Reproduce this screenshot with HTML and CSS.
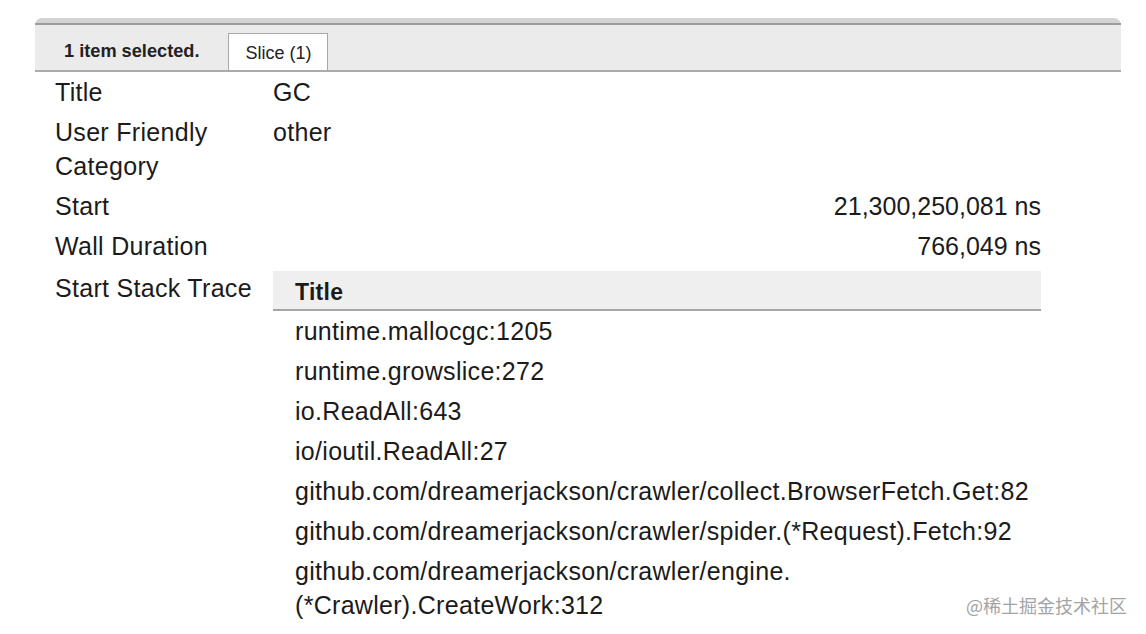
FILE: index.html
```html
<!DOCTYPE html>
<html>
<head>
<meta charset="utf-8">
<link rel="stylesheet" href="styles.css">
</head>
<body>
<div class="panel">
  <div class="tabbar">
    <div class="tabbar-inner">
      <span class="selected">1 item selected.</span>
      <span class="tab">Slice (1)</span>
    </div>
  </div>
  <div class="props">
    <div class="label">Title</div>
    <div class="value">GC</div>
    <div class="label">User Friendly<br>Category</div>
    <div class="value">other</div>
    <div class="label">Start</div>
    <div class="value num">21,300,250,081 ns</div>
    <div class="label">Wall Duration</div>
    <div class="value num">766,049 ns</div>
    <div class="label trace-label">Start Stack Trace</div>
    <div class="value trace">
      <div class="trace-head">Title</div>
      <div class="trace-row">runtime.mallocgc:1205</div>
      <div class="trace-row">runtime.growslice:272</div>
      <div class="trace-row">io.ReadAll:643</div>
      <div class="trace-row">io/ioutil.ReadAll:27</div>
      <div class="trace-row">github.com/dreamerjackson/crawler/collect.BrowserFetch.Get:82</div>
      <div class="trace-row">github.com/dreamerjackson/crawler/spider.(*Request).Fetch:92</div>
      <div class="trace-row">github.com/dreamerjackson/crawler/engine.<br>(*Crawler).CreateWork:312</div>
    </div>
  </div>
</div>
<div class="watermark">@稀土掘金技术社区</div>
</body>
</html>
```

FILE: styles.css
```css
html, body {
  margin: 0;
  padding: 0;
  background: #ffffff;
}
body {
  font-family: "Liberation Sans", Arial, sans-serif;
  color: #1b1b1b;
  width: 1146px;
  height: 634px;
  overflow: hidden;
  position: relative;
}
.panel {
  margin: 18px 0 0 35px;
  width: 1086px;
}
.tabbar {
  background: #d3d3d3;
  padding-top: 5px;
  border-radius: 7px 7px 0 0;
}
.tabbar-inner {
  background: #ebebeb;
  border-top: 2px solid #9c9c9c;
  border-bottom: 2px solid #ababab;
  height: 45px;
  display: flex;
  align-items: flex-end;
  padding-left: 29px;
}
.selected {
  font-weight: bold;
  font-size: 18.2px;
  color: #222;
  align-self: center;
  margin-top: 8px;
  margin-right: 29px;
}
.tab {
  background: #ffffff;
  border: 1px solid #a8a8a8;
  border-bottom: none;
  height: 37px;
  box-sizing: border-box;
  padding: 0 16px;
  font-size: 18px;
  line-height: 38px;
  color: #222;
}
.props {
  display: grid;
  grid-template-columns: 218px 768px;
  padding-left: 20px;
  font-size: 25px;
  line-height: 34px;
  letter-spacing: 0.3px;
}
.label, .value {
  padding: 3px 0;
}
.num {
  text-align: right;
  letter-spacing: 0;
}
.trace-label {
  padding-top: 5px;
}
.trace {
  padding-top: 5px;
}
.trace-head {
  background: #efefef;
  border-bottom: 2px solid #a6a6a6;
  font-weight: bold;
  height: 40px;
  box-sizing: border-box;
  line-height: 42px;
  padding-left: 22px;
  font-size: 23px;
}
.trace-row {
  padding: 3px 0 3px 22px;
  line-height: 34px;
}
.watermark {
  position: absolute;
  right: 19px;
  bottom: 18px;
  font-family: "Noto Sans CJK SC", sans-serif;
  font-size: 18px;
  line-height: 22px;
  color: #a3a3a3;
}
```
